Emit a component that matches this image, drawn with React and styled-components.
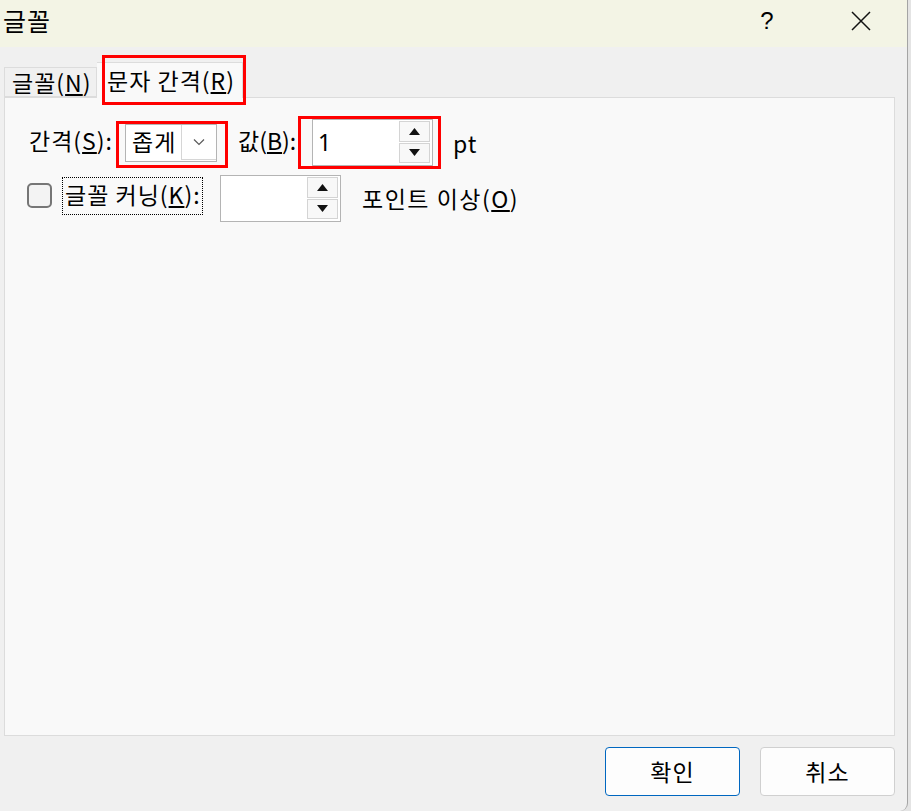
import React from 'react'
import styled, { createGlobalStyle } from 'styled-components'

const GlobalStyle = createGlobalStyle`
  html, body {
    margin: 0;
    padding: 0;
    background: #e4e4e4;
  }
  body {
    font-family: "Noto Sans CJK KR", "Noto Sans", sans-serif;
    color: #000;
    letter-spacing: 1px;
  }
`

const Dialog = styled.div`
  width: 908px;
  height: 811px;
  box-sizing: border-box;
  display: flex;
  flex-direction: column;
  background: #f0f0f0;
  border-right: 1px solid #a4a4a4;
  border-bottom-right-radius: 8px;
  overflow: hidden;
`

const TitleBar = styled.div`
  height: 47px;
  flex-shrink: 0;
  display: flex;
  align-items: center;
  background: #f3f4e5;
  padding-left: 3px;
`

const Title = styled.div`
  flex: 1;
  font-size: 25px;
  line-height: 1;
  margin-top: -6px;
`

const TitleButton = styled.div`
  width: 93px;
  height: 47px;
  display: flex;
  align-items: center;
  justify-content: center;
  font-family: "Liberation Sans", sans-serif;
  font-size: 24px;
  margin-top: -6px;
`

const Body = styled.div`
  flex: 1;
  display: flex;
  flex-direction: column;
  padding: 15px 12px 0 4px;
`

const TabRow = styled.div`
  display: flex;
  align-items: flex-end;
  height: 35px;
`

const Tab = styled.div`
  box-sizing: border-box;
  position: relative;
  width: ${p => p.$w}px;
  height: ${p => (p.$active ? '36px' : '30px')};
  margin-bottom: ${p => (p.$active ? '-1px' : '0')};
  padding: 0 0 0 ${p => (p.$active ? '10px' : '7px')};
  display: flex;
  align-items: center;
  background: ${p => (p.$active ? '#f9f9f9' : '#f0f0f0')};
  border: 1px solid #dcdcdc;
  border-bottom: ${p => (p.$active ? 'none' : '1px solid #dcdcdc')};
  border-left: ${p => (p.$active ? 'none' : '1px solid #dcdcdc')};
  font-size: 23px;
  line-height: 1;
  white-space: nowrap;
  z-index: ${p => (p.$active ? 1 : 0)};
`

const Highlight = styled.div`
  position: relative;
  display: flex;
  align-items: center;
  &::after {
    content: '';
    position: absolute;
    top: ${p => p.$t}px;
    right: ${p => p.$r}px;
    bottom: ${p => p.$b}px;
    left: ${p => p.$l}px;
    border: 3px solid #ff0000;
    pointer-events: none;
    z-index: 5;
  }
`

const Panel = styled.div`
  box-sizing: border-box;
  height: 639px;
  background: #f9f9f9;
  border: 1px solid #dcdcdc;
  padding: 21px 0 0 24px;
`

const Row = styled.div`
  display: flex;
  align-items: center;
  height: 47px;
  margin-top: ${p => p.$gap || 0}px;
`

const Label = styled.div`
  width: ${p => p.$w}px;
  flex-shrink: 0;
  font-size: 23px;
  line-height: 1;
  white-space: nowrap;
  letter-spacing: ${p => (p.$ls !== undefined ? p.$ls : 1)}px;
  margin-left: ${p => p.$ml || 0}px;
  margin-top: ${p => p.$mt || 0}px;
`

const Combo = styled.div`
  box-sizing: border-box;
  width: 92px;
  height: 38px;
  display: flex;
  align-items: stretch;
  background: #fff;
  border: 1px solid #b4b4b4;
`

const ComboText = styled.div`
  flex: 1;
  display: flex;
  align-items: center;
  padding-left: 6px;
  font-size: 23px;
  line-height: 1;
  margin-top: -2px;
`

const DropButton = styled.div`
  box-sizing: border-box;
  width: 35px;
  margin: 0 0 1px;
  display: flex;
  align-items: center;
  justify-content: center;
  border: 1px solid #d6d6d6;
  border-right: none;
  border-top: none;
  background: #fff;
`

const Spinner = styled.div`
  box-sizing: border-box;
  width: 121px;
  height: 47px;
  display: flex;
  background: #fff;
  border: 1px solid #b4b4b4;
  margin-left: ${p => p.$ml || 0}px;
  padding: 1px 2px 2px 0;
`

const SpinText = styled.div`
  flex: 1;
  display: flex;
  align-items: center;
  padding-left: 5px;
  font-family: "Noto Sans", sans-serif;
  font-size: 23px;
  line-height: 1;
`

const SpinButtons = styled.div`
  width: 31px;
  display: flex;
  flex-direction: column;
  gap: 1px;
`

const SpinButton = styled.div`
  flex: 1;
  display: flex;
  align-items: center;
  justify-content: center;
  background: #f8f8f8;
  border: 1px solid #d4d4d4;
`

const Checkbox = styled.div`
  box-sizing: border-box;
  width: 25px;
  height: 25px;
  flex-shrink: 0;
  margin: -7px 10px 0 -2px;
  border: 2px solid #767676;
  border-radius: 5px;
  background: #f3f3f3;
`

const FocusLabel = styled.div`
  box-sizing: border-box;
  width: 141px;
  height: 38px;
  display: flex;
  align-items: center;
  padding: 0 0 3px 2px;
  margin-top: -6px;
  border: 1px dotted #000;
  font-size: 23px;
  line-height: 1;
  white-space: nowrap;
  margin-right: 17px;
  overflow: hidden;
`

const Footer = styled.div`
  display: flex;
  justify-content: flex-end;
  gap: 20px;
  padding-top: 11px;
`

const Button = styled.div`
  box-sizing: border-box;
  width: 135px;
  height: 49px;
  display: flex;
  align-items: center;
  justify-content: center;
  background: #fdfdfd;
  border: 1px solid ${p => (p.$primary ? '#0067c0' : '#d0d0d0')};
  border-radius: 4px;
  font-size: 23px;
  line-height: 1;
`

const Chevron = () => (
  <svg width="12" height="8" viewBox="0 0 12 8">
    <path d="M1 1.5 L6 6.5 L11 1.5" fill="none" stroke="#5a5a5a" strokeWidth="1.2" />
  </svg>
)

const Arrow = ({ up }) => (
  <svg width="11" height="7" viewBox="0 0 11 7">
    {up ? <path d="M5.5 0 L11 7 L0 7 Z" fill="#111" /> : <path d="M0 0 L11 0 L5.5 7 Z" fill="#111" />}
  </svg>
)

const CloseIcon = () => (
  <svg width="20" height="20" viewBox="0 0 20 20">
    <path d="M1 1 L19 19 M19 1 L1 19" stroke="#111" strokeWidth="1.5" />
  </svg>
)

const SpinBox = ({ value, ml }) => (
  <Spinner $ml={ml}>
    <SpinText>{value}</SpinText>
    <SpinButtons>
      <SpinButton><Arrow up /></SpinButton>
      <SpinButton><Arrow /></SpinButton>
    </SpinButtons>
  </Spinner>
)

const App = () => {
  return (
    <>
      <GlobalStyle />
      <Dialog>
        <TitleBar>
          <Title>글꼴</Title>
          <TitleButton>?</TitleButton>
          <TitleButton><CloseIcon /></TitleButton>
        </TitleBar>
        <Body>
          <TabRow>
            <Tab $w={93}>글꼴(<u>N</u>)</Tab>
            <Highlight $t={-7} $r={-3} $b={-8} $l={5}>
              <Tab $w={146} $active>문자 간격(<u>R</u>)</Tab>
            </Highlight>
          </TabRow>
          <Panel>
            <Row>
              <Label $w={96} $mt={-4}>간격(<u>S</u>):</Label>
              <Highlight $t={-3} $r={-11} $b={-6} $l={-9}>
                <Combo>
                  <ComboText>좁게</ComboText>
                  <DropButton><Chevron /></DropButton>
                </Combo>
              </Highlight>
              <Label $w={74} $ml={21} $mt={-4} $ls={0}>값(<u>B</u>):</Label>
              <Highlight $t={-3} $r={-8} $b={-3} $l={-14}>
                <SpinBox value="1" />
              </Highlight>
              <Label $w={40} $ml={20} $mt={2}>pt</Label>
            </Row>
            <Row $gap={9}>
              <Checkbox />
              <FocusLabel>글꼴 커닝(<u>K</u>):</FocusLabel>
              <SpinBox value="" />
              <Label $w={200} $ml={21} $mt={0} $ls={1.5}>포인트 이상(<u>O</u>)</Label>
            </Row>
          </Panel>
          <Footer>
            <Button $primary>확인</Button>
            <Button>취소</Button>
          </Footer>
        </Body>
      </Dialog>
    </>
  )
}

export default App
